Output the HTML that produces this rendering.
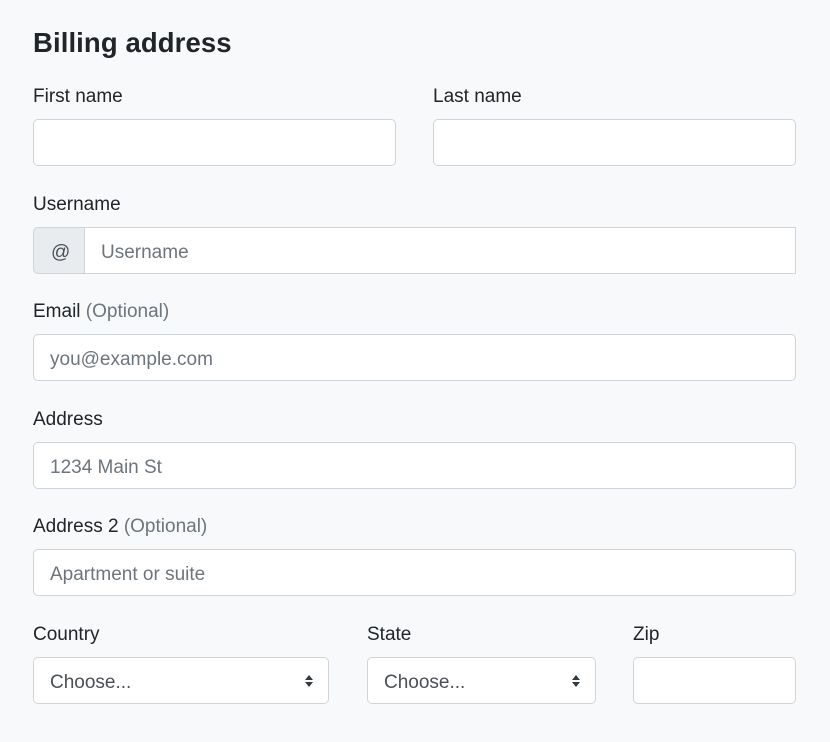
<!DOCTYPE html>
<html><head><style>
body{margin:0;width:830px;height:742px;background:#f8f9fa;font-family:"Liberation Sans",sans-serif;color:#212529;position:relative;overflow:hidden}
h4{position:absolute;left:33px;top:25px;margin:0;font-size:27.5px;font-weight:bold;line-height:36px;color:#212529;letter-spacing:0.1px}
.l{position:absolute;font-size:19px;line-height:24px}
.m{color:#6c757d}
.i{position:absolute;background:#fff;border:1px solid #ced4da;border-radius:5px;box-sizing:border-box;height:47px;font-size:19px;color:#6c757d;line-height:49px;padding-left:16px}
.ar{position:absolute;right:14px;top:15px;width:10px}
</style></head><body>
<h4>Billing address</h4>
<div class="l" style="left:33px;top:85px">First name</div>
<div class="l" style="left:433px;top:85px">Last name</div>
<div class="i" style="left:33px;top:119px;width:363px"></div>
<div class="i" style="left:433px;top:119px;width:363px"></div>

<div class="l" style="left:33px;top:193px">Username</div>
<div class="i" style="left:33px;top:227px;width:52px;background:#e9ecef;border-radius:5px 0 0 5px;color:#495057;padding-left:17px">@</div>
<div class="i" style="left:84px;top:227px;width:712px;border-radius:0">Username</div>

<div class="l" style="left:33px;top:300px">Email <span class="m">(Optional)</span></div>
<div class="i" style="left:33px;top:334px;width:763px">you@example.com</div>

<div class="l" style="left:33px;top:408px">Address</div>
<div class="i" style="left:33px;top:442px;width:763px">1234 Main St</div>

<div class="l" style="left:33px;top:515px">Address 2 <span class="m">(Optional)</span></div>
<div class="i" style="left:33px;top:549px;width:763px">Apartment or suite</div>

<div class="l" style="left:33px;top:623px">Country</div>
<div class="l" style="left:367px;top:623px">State</div>
<div class="l" style="left:633px;top:623px">Zip</div>
<div class="i" style="left:33px;top:657px;width:296px;color:#495057">Choose...<svg class="ar" viewBox="0 0 10 16" height="16"><path d="M1 7L5 2L9 7Z M1 9L5 14L9 9Z" fill="#343a40"/></svg></div>
<div class="i" style="left:367px;top:657px;width:229px;color:#495057">Choose...<svg class="ar" viewBox="0 0 10 16" height="16"><path d="M1 7L5 2L9 7Z M1 9L5 14L9 9Z" fill="#343a40"/></svg></div>
<div class="i" style="left:633px;top:657px;width:163px"></div>
</body></html>
